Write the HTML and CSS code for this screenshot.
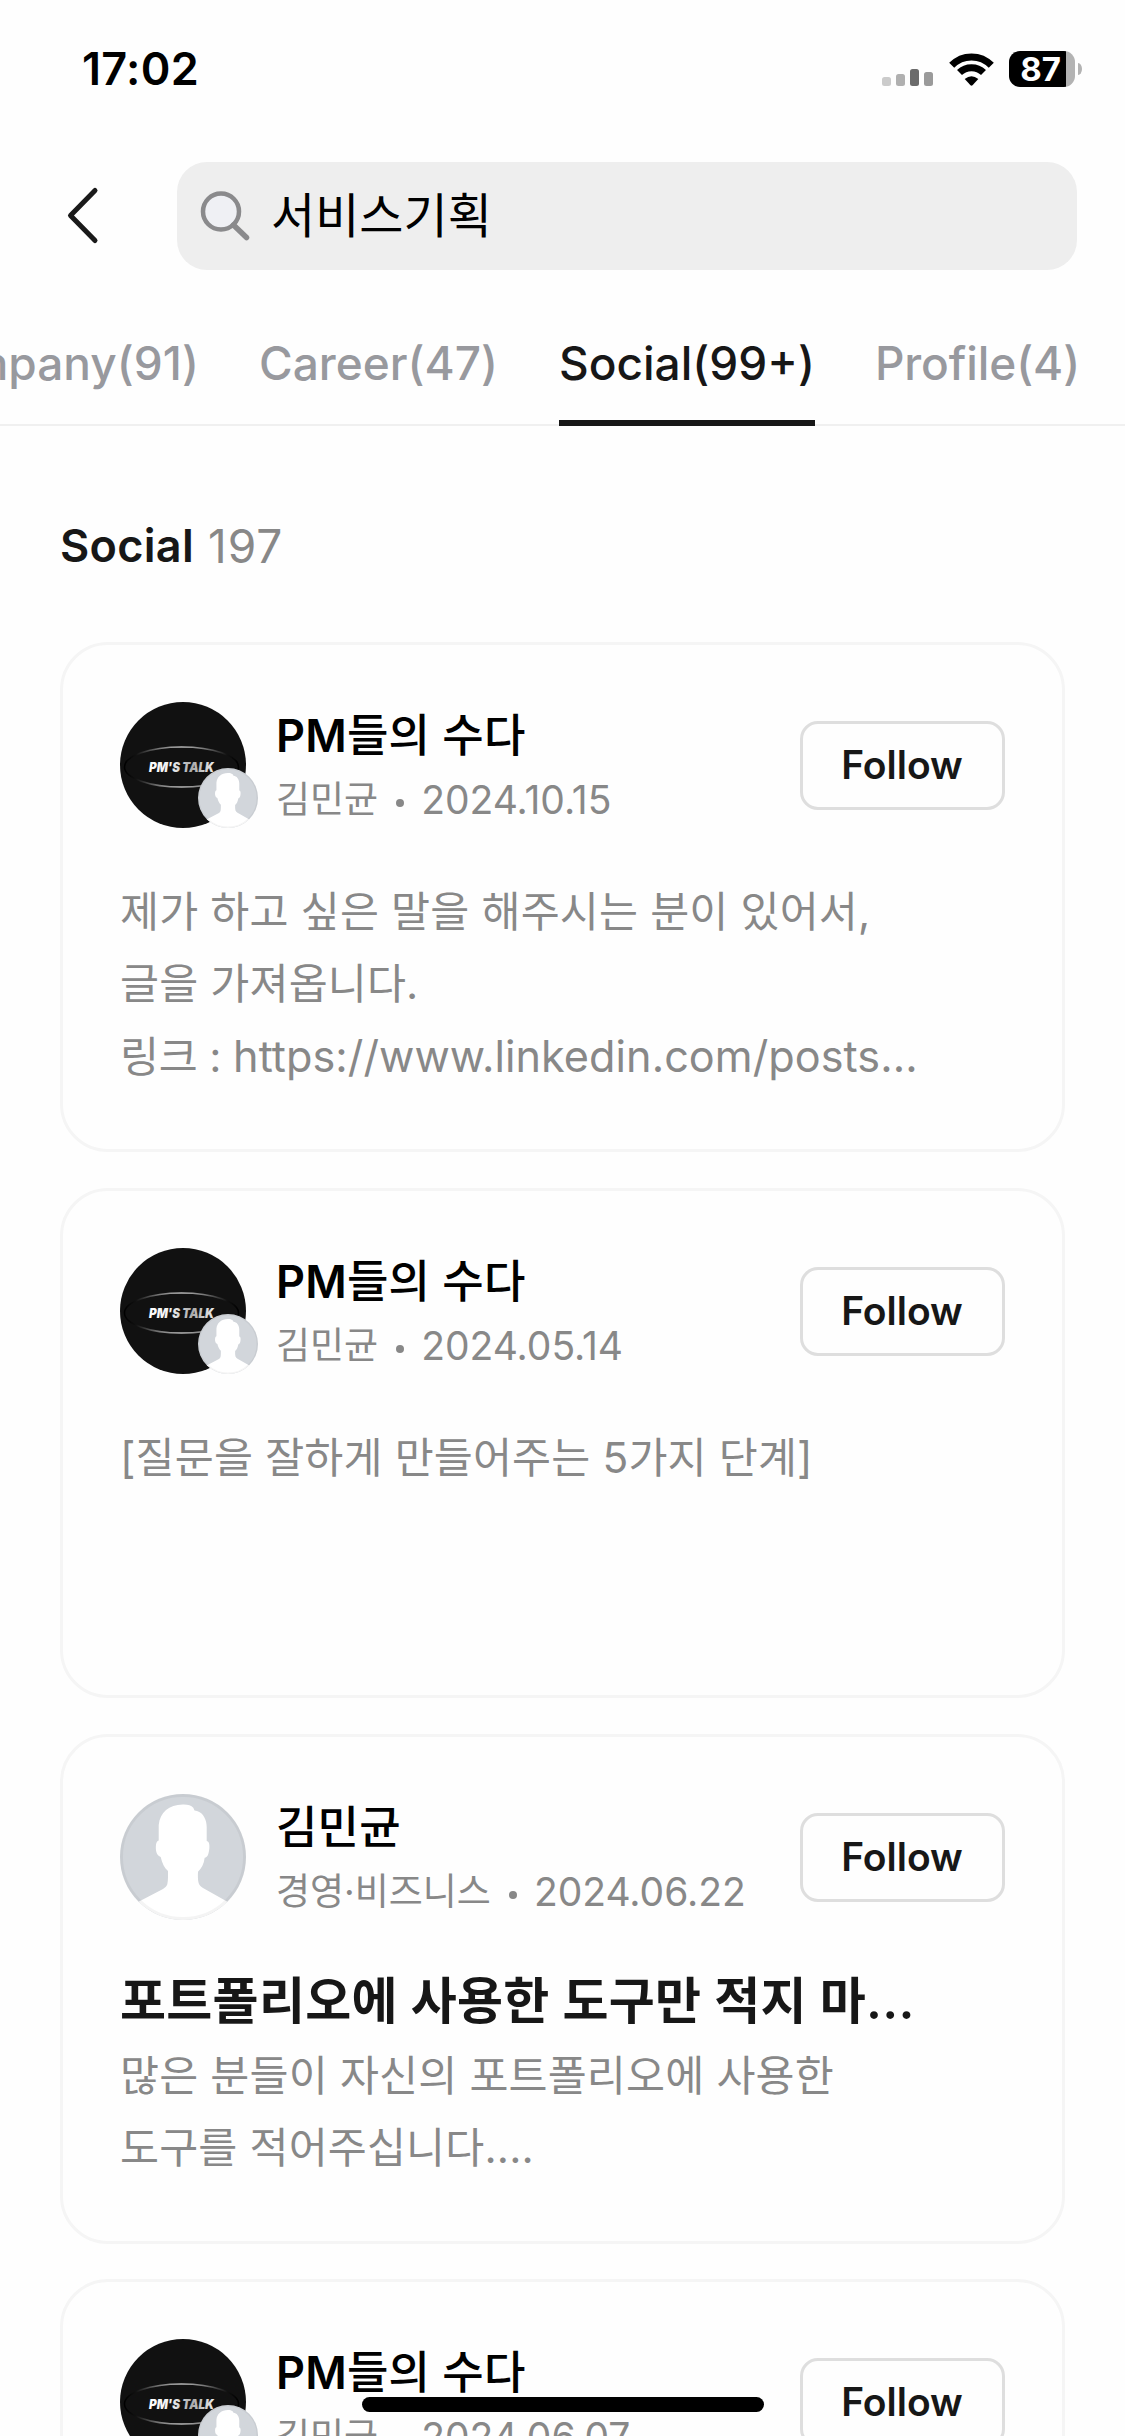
FILE: index.html
```html
<!DOCTYPE html>
<html lang="ko">
<head>
<meta charset="utf-8">
<title>Search</title>
<link rel="stylesheet" href="styles.css">
</head>
<body>
<svg class="defs" width="0" height="0" aria-hidden="true">
  <defs>
    <linearGradient id="ring" x1="0" x2="1" y1="0" y2="0">
      <stop offset="0" stop-color="#000"/>
      <stop offset="0.1" stop-color="#111"/>
      <stop offset="0.3" stop-color="#777"/>
      <stop offset="0.5" stop-color="#b5b5b5"/>
      <stop offset="0.7" stop-color="#777"/>
      <stop offset="0.9" stop-color="#111"/>
      <stop offset="1" stop-color="#000"/>
    </linearGradient>
    <linearGradient id="shine" x1="0" x2="1" y1="0" y2="0">
      <stop offset="0" stop-color="#fff"/>
      <stop offset="0.35" stop-color="#eee"/>
      <stop offset="0.65" stop-color="#aaa"/>
      <stop offset="1" stop-color="#eee"/>
    </linearGradient>
    <clipPath id="disc"><circle cx="63" cy="63" r="63"/></clipPath>
  </defs>
  <symbol id="talk" viewBox="0 0 126 126">
    <circle cx="63" cy="63" r="63" fill="#111"/>
    <ellipse cx="61.5" cy="65" rx="57" ry="20" fill="none" stroke="url(#ring)" stroke-width="1.6"/>
    <text x="29" y="70" textLength="65" lengthAdjust="spacingAndGlyphs" class="talk-text" fill="url(#shine)">PM'S TALK</text>
  </symbol>
  <symbol id="person" viewBox="0 0 126 126">
    <g clip-path="url(#disc)">
      <rect width="126" height="126" fill="#d2d6db"/>
      <path fill="#fff" d="M62.7 10.5C68 10.300 71 11.500 73.300 13.700L74.500 16.500L77 17C83.500 19 86.700 26 86.700 33V47C90.500 47 89.700 56 88.300 60C87.500 62.500 86 63.700 84.700 63.700C83.800 70 81.500 74.500 78 77.700C77.800 82 77.800 86 78.700 89.300C79.500 91.500 81 93 83 94L107 107.500V126H19V107.500L43 95C45.500 93.500 46.700 92 47.300 90.300C48.200 86 48 81 48 77C44.500 74 42 69 40.700 63C38 62 36.700 59.500 36.300 57.700C35.500 54 35.500 47 38.700 46.500V31C40 18 49 11 62.700 10.500Z"/>
    </g>
    <circle cx="63" cy="63" r="61.500" fill="none" stroke="#000" stroke-opacity=".045" stroke-width="3"/>
  </symbol>
</svg>

<div class="status">
  <span class="time">17:02</span>
  <div class="status-icons">
    <svg class="signal" width="51" height="33" viewBox="0 0 51 33">
      <rect x="0" y="24" width="9" height="9" rx="2.500" fill="#cbcbcb"/>
      <rect x="14" y="21" width="9" height="12" rx="2.500" fill="#b0b0b0"/>
      <rect x="28" y="16" width="9" height="17" rx="2.500" fill="#6b6b6b"/>
      <rect x="42" y="19" width="9" height="14" rx="2.500" fill="#9a9a9a"/>
    </svg>
    <svg class="wifi" width="45" height="33" viewBox="0 0 45 33">
      <path d="M2.700 12.300A27.500 27.500 0 0 1 42.300 12.300M10.500 19.600A17 17 0 0 1 34.500 19.600" fill="none" stroke="#000" stroke-width="7"/>
      <path d="M15.700 26Q22.500 20.700 29.300 26L23.500 32.300Q22.500 33.200 21.500 32.300Z"/>
    </svg>
    <div class="battery"><span class="battery-body">87</span><span class="battery-cap"></span></div>
  </div>
</div>

<header class="search-row">
  <svg class="back" width="33" height="60" viewBox="0 0 33 60"><path d="M29 4.500L4.500 29.500L29 54.500" fill="none" stroke="#1a1a1a" stroke-width="5" stroke-linecap="round" stroke-linejoin="round"/></svg>
  <div class="search">
    <svg width="51" height="51" viewBox="0 0 51 51" fill="none" stroke="#8a8a8c"><circle cx="21" cy="20.500" r="18" fill="#eff0f4" stroke-width="4.500"/><path d="M33.500 34L46.500 46.500" stroke-width="5.500" stroke-linecap="round"/></svg>
    <span>서비스기획</span>
  </div>
</header>

<nav class="tabs">
  <span class="tab">Company(91)</span>
  <span class="tab">Career(47)</span>
  <span class="tab active">Social(99+)</span>
  <span class="tab">Profile(4)</span>
</nav>

<main>
  <h1 class="heading">Social<span class="count">197</span></h1>
  <section class="cards">
    <article class="card">
      <div class="card-head">
        <div class="avatar"><svg class="main-pic"><use href="#talk"/></svg><svg class="sub-pic"><use href="#person"/></svg></div>
        <div class="who">
          <div class="name">PM<span class="ko">들의 수다</span></div>
          <div class="meta"><span class="by">김민균</span><span class="dot"></span><span>2024.10.15</span></div>
        </div>
        <button class="follow">Follow</button>
      </div>
      <p class="text">제가 하고 싶은 말을 해주시는 분이 있어서,<br>글을 가져옵니다.<br><span class="label">링크 : </span><span class="link">https://www.linkedin.com/posts...</span></p>
    </article>
    <article class="card">
      <div class="card-head">
        <div class="avatar"><svg class="main-pic"><use href="#talk"/></svg><svg class="sub-pic"><use href="#person"/></svg></div>
        <div class="who">
          <div class="name">PM<span class="ko">들의 수다</span></div>
          <div class="meta"><span class="by">김민균</span><span class="dot"></span><span>2024.05.14</span></div>
        </div>
        <button class="follow">Follow</button>
      </div>
      <p class="text">[질문을 잘하게 만들어주는 5가지 단계]</p>
    </article>
    <article class="card">
      <div class="card-head">
        <div class="avatar"><svg class="main-pic"><use href="#person"/></svg></div>
        <div class="who">
          <div class="name"><span class="ko">김민균</span></div>
          <div class="meta"><span class="by">경영·비즈니스</span><span class="dot"></span><span>2024.06.22</span></div>
        </div>
        <button class="follow">Follow</button>
      </div>
      <h2 class="title">포트폴리오에 사용한 도구만 적지 마...</h2>
      <p class="text after-title">많은 분들이 자신의 포트폴리오에 사용한<br>도구를 적어주십니다....</p>
    </article>
    <article class="card">
      <div class="card-head">
        <div class="avatar"><svg class="main-pic"><use href="#talk"/></svg><svg class="sub-pic"><use href="#person"/></svg></div>
        <div class="who">
          <div class="name">PM<span class="ko">들의 수다</span></div>
          <div class="meta"><span class="by">김민균</span><span class="dot"></span><span>2024.06.07</span></div>
        </div>
        <button class="follow">Follow</button>
      </div>
    </article>
  </section>
</main>
<div class="home-indicator"></div>
</body>
</html>
```
FILE: styles.css
```css
* { box-sizing: border-box; }
body {
  margin: 0;
  width: 1125px;
  height: 2436px;
  overflow: hidden;
  background: #fefefe;
  color: #000;
  font-family: Inter, "Noto Sans CJK KR", sans-serif;
}
svg { display: block; flex: none; }
.defs { position: absolute; }
.talk-text { font: italic 900 13px Inter, sans-serif; }

.status {
  height: 138px;
  padding: 0 43px 0 82px;
  display: flex;
  align-items: center;
  justify-content: space-between;
}
.time { font-size: 45px; font-weight: 600; letter-spacing: .3px; line-height: 54px; }
.status-icons { display: flex; align-items: center; }
.wifi { margin: 0 15px 0 16px; }
.battery { display: flex; align-items: center; gap: 3px; }
.battery-body {
  width: 66px;
  height: 36px;
  padding-right: 3px;
  border-radius: 11px;
  background: linear-gradient(90deg, #000 57px, #b3b3b3 57px);
  color: #fff;
  font-size: 33px;
  font-weight: 700;
  line-height: 36px;
  text-align: center;
}
.battery-cap { width: 4px; height: 12px; border-radius: 0 4px 4px 0 / 0 6px 6px 0; background: #b3b3b3; }

.search-row {
  display: flex;
  align-items: center;
  padding: 24px 48px 0 66px;
}
.back { margin-right: 78px; }
.search {
  flex: 1;
  height: 108px;
  padding-left: 23px;
  display: flex;
  align-items: center;
  gap: 20px;
  border-radius: 30px;
  background: #eee;
  font-size: 48px;
  line-height: 60px;
}

.tabs {
  height: 120px;
  margin-top: 36px;
  padding-right: 45px;
  display: flex;
  justify-content: flex-end;
  gap: 60px;
  background: linear-gradient(#f0f0f0, #f0f0f0) 0 118px / 100% 2px no-repeat;
}
.tab {
  height: 120px;
  border-bottom: 6px solid transparent;
  color: #98999e;
  font-size: 46px;
  font-weight: 500;
  line-height: 114px;
}
.tab:last-child { letter-spacing: -.1px; }
.tab.active { margin-left: 1px; color: #171717; border-color: #171717; }

main { padding: 87px 60px 0; }
.heading {
  margin: 0 0 63px;
  display: flex;
  gap: 14px;
  color: #171717;
  font-size: 45px;
  font-weight: 600;
  letter-spacing: .3px;
  line-height: 66px;
}
.count { color: #888; font-size: 46px; font-weight: 400; letter-spacing: .9px; }

.cards { display: flex; flex-direction: column; gap: 36px; }
.card {
  flex: none;
  height: 510px;
  padding: 57px;
  border: 3px solid #f5f5f5;
  border-radius: 48px;
}
.card:last-child { margin-top: -1px; }
.card-head { display: flex; align-items: center; height: 126px; }
.avatar { position: relative; flex: none; width: 126px; height: 126px; }
.main-pic { width: 126px; height: 126px; }
.sub-pic { position: absolute; left: 78px; top: 66px; width: 60px; height: 60px; }
.who { flex: 1; display: flex; flex-direction: column; gap: 4px; padding-left: 30px; }
.name { font-size: 45px; font-weight: 600; letter-spacing: .2px; line-height: 66px; }
.name .ko { font-weight: 500; }
.meta { display: flex; align-items: center; color: #888; font-size: 39px; line-height: 54px; }
.by { font-size: 37px; }
.dot { width: 8px; height: 8px; margin: 6px 17px 0 18px; border-radius: 50%; background: #888; }
.follow {
  width: 205px;
  height: 89px;
  margin-top: 1px;
  padding: 0 1px 1px 0;
  border: 3px solid #dedede;
  border-radius: 18px;
  background: none;
  color: #171717;
  font: 600 39px/82px Inter, sans-serif;
}
.title {
  margin: 44px 0 0;
  color: #171717;
  font-size: 50px;
  font-weight: 600;
  letter-spacing: .3px;
  line-height: 75px;
  white-space: nowrap;
}
.text {
  margin: 48px 0 0;
  color: #888;
  font-size: 42.4px;
  letter-spacing: .15px;
  line-height: 72px;
  white-space: nowrap;
}
.text.after-title { margin: 1px 0 0; }
.label { letter-spacing: -.2px; }
.link { font-size: 43.2px; letter-spacing: .05px; }

.home-indicator {
  position: fixed;
  left: 362px;
  top: 2397px;
  width: 402px;
  height: 15px;
  border-radius: 8px;
  background: #000;
}
```
